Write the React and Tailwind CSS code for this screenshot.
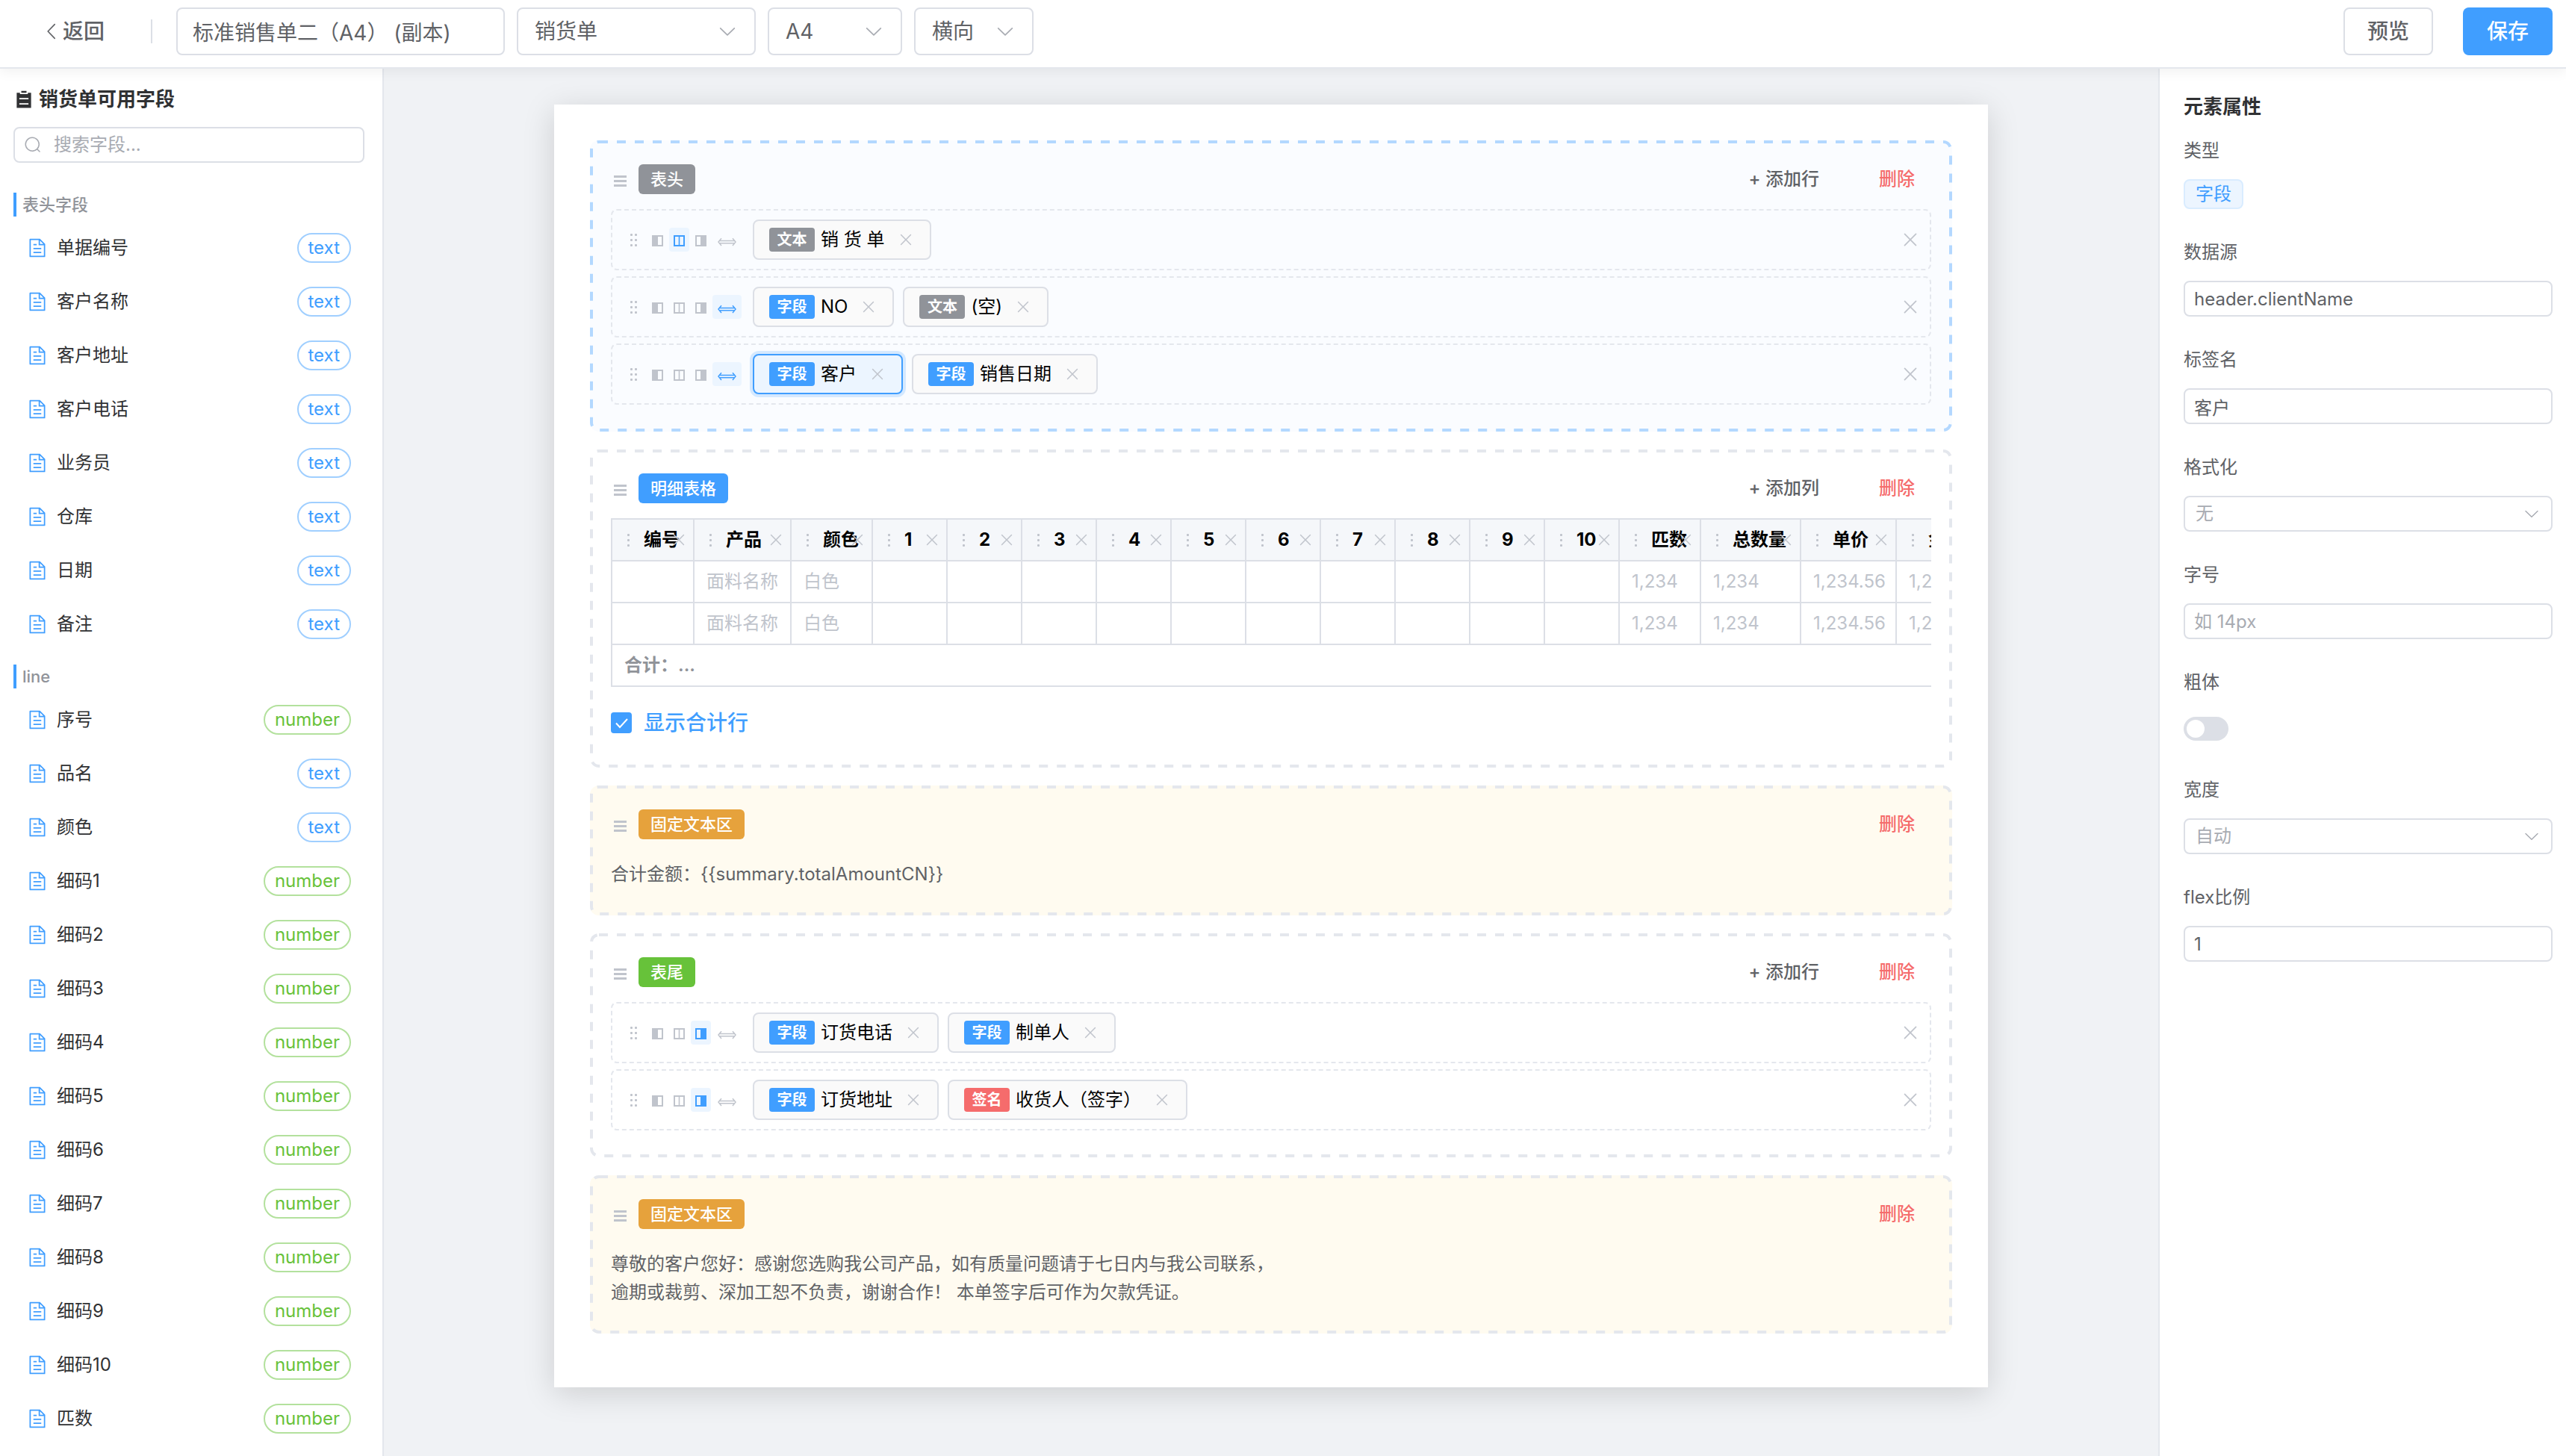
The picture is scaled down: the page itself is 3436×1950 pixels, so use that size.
import React from "react";

const PATHS = {
  arrowDown:
    "M831.872 340.864 512 652.672 192.128 340.864a30.592 30.592 0 0 0-42.752 0 29.12 29.12 0 0 0 0 41.6L489.664 714.24a32 32 0 0 0 44.672 0l340.288-331.712a29.12 29.12 0 0 0 0-41.728 30.592 30.592 0 0 0-42.752 0z",
  arrowLeft:
    "M609.408 149.376 277.76 489.6a32 32 0 0 0 0 44.672l331.648 340.352a29.12 29.12 0 0 0 41.728 0 30.592 30.592 0 0 0 0-42.752L339.264 511.936l311.872-319.872a30.592 30.592 0 0 0 0-42.688 29.12 29.12 0 0 0-41.728 0z",
  close:
    "M764.288 214.592 512 466.88 259.712 214.592a31.936 31.936 0 0 0-45.12 45.12L466.752 512 214.528 764.224a31.936 31.936 0 1 0 45.12 45.184L512 557.184l252.288 252.288a31.936 31.936 0 0 0 45.12-45.12L557.12 512.064l252.288-252.352a31.936 31.936 0 1 0-45.12-45.184z",
  document:
    "M832 384H576V128H192v768h640zm-26.496-64L640 154.496V320zM160 64h480l256 256v608a32 32 0 0 1-32 32H160a32 32 0 0 1-32-32V96a32 32 0 0 1 32-32m160 448h384v64H320zm0-192h160v64H320zm0 384h384v64H320z",
  search:
    "m795.904 750.72 124.992 124.928a32 32 0 0 1-45.248 45.248L750.656 795.904a416 416 0 1 1 45.248-45.248zM480 832a352 352 0 1 0 0-704 352 352 0 0 0 0 704",
  list: "M704 192h160v736H160V192h160v64h384zM288 512h448v-64H288zm0 256h448v-64H288zm96-576V96h256v96z",
};

function Icon({ name, className }) {
  return (
    <svg viewBox="0 0 1024 1024" fill="currentColor" aria-hidden="true" className={className}>
      <path d={PATHS[name]} />
    </svg>
  );
}

/* ---------- top bar ---------- */

function SelectBox({ id, label, value, className, size = "large", muted }) {
  const large = size === "large";
  return (
    <div className={`relative ${className}`}>
      <select
        id={id}
        aria-label={label}
        defaultValue={value}
        className={`w-full appearance-none rounded-lg border-2 border-[#dcdfe6] bg-white outline-none ${
          large ? "h-16 pr-14 pl-[22px] text-[28px]" : "h-12 pr-12 pl-3.5 text-2xl"
        } ${muted ? "text-[#a8abb2]" : "text-[#606266]"}`}
      >
        <option>{value}</option>
      </select>
      <Icon
        name="arrowDown"
        className={`pointer-events-none absolute text-[#a8abb2] ${
          large ? "top-[18px] right-6 size-7" : "top-3 right-4 size-6"
        }`}
      />
    </div>
  );
}

function TopBar() {
  return (
    <header className="relative z-10 flex shrink-0 items-center border-b-2 border-[#e4e7ed] bg-white pt-2.5 pr-[18px] pb-4 pl-[26px] shadow-[0_4px_16px_rgba(0,0,0,0.06)]">
      <button type="button" className="flex h-16 items-center px-[30px] text-[28px] font-medium text-[#606266]">
        <Icon name="arrowLeft" className="size-7" />
        返回
      </button>
      <div className="mx-8 h-8 w-0.5 bg-[#dcdfe6]" />
      <div className="flex gap-4">
        <input
          aria-label="模板名称"
          defaultValue="标准销售单二（A4） (副本)"
          className="h-16 w-[440px] rounded-lg border-2 border-[#dcdfe6] px-5 text-[28px] text-[#606266] outline-none"
        />
        <SelectBox label="单据类型" value="销货单" className="w-80" />
        <SelectBox label="纸张" value="A4" className="w-[180px]" />
        <SelectBox label="方向" value="横向" className="w-40" />
      </div>
      <div className="ml-auto flex gap-10">
        <button type="button" className="h-16 w-30 rounded-lg border-2 border-[#dcdfe6] text-[28px] font-medium text-[#606266]">
          预览
        </button>
        <button type="button" className="h-16 w-30 rounded-lg bg-[#409eff] text-[28px] font-medium text-white">
          保存
        </button>
      </div>
    </header>
  );
}

/* ---------- field list ---------- */

const FIELD_GROUPS = [
  {
    title: "表头字段",
    fields: [
      ["单据编号", "text"],
      ["客户名称", "text"],
      ["客户地址", "text"],
      ["客户电话", "text"],
      ["业务员", "text"],
      ["仓库", "text"],
      ["日期", "text"],
      ["备注", "text"],
    ],
  },
  {
    title: "line",
    fields: [
      ["序号", "number"],
      ["品名", "text"],
      ["颜色", "text"],
      ["细码1", "number"],
      ["细码2", "number"],
      ["细码3", "number"],
      ["细码4", "number"],
      ["细码5", "number"],
      ["细码6", "number"],
      ["细码7", "number"],
      ["细码8", "number"],
      ["细码9", "number"],
      ["细码10", "number"],
      ["匹数", "number"],
    ],
  },
];

function TypeBadge({ type }) {
  const tone =
    type === "text" ? "border-[#a0cfff] text-[#409eff]" : "border-[#b3e19d] text-[#67c23a]";
  return (
    <span className={`flex h-10 items-center rounded-full border-2 px-[13px] text-2xl ${tone}`}>{type}</span>
  );
}

function FieldPanel() {
  return (
    <aside className="w-[514px] shrink-0 overflow-hidden border-r-2 border-[#e4e7ed] bg-white px-[18px] pt-4">
      <h2 className="mb-3 flex items-center gap-1.5 text-[26px] leading-[50px] font-bold text-[#303133]">
        <Icon name="list" className="size-7" />
        销货单可用字段
      </h2>
      <label className="mr-1.5 mb-[22px] flex h-12 items-center gap-4 rounded-lg border-2 border-[#dcdfe6] px-3 text-[#a8abb2]">
        <Icon name="search" className="size-6 shrink-0" />
        <input
          type="search"
          aria-label="搜索字段"
          placeholder="搜索字段..."
          className="min-w-0 flex-1 text-2xl outline-none placeholder:text-[#a8abb2]"
        />
      </label>
      {FIELD_GROUPS.map((group) => (
        <section key={group.title} className="pt-[18px]">
          <h3 className="mb-1.5 border-l-4 border-[#409eff] pl-2 text-[22px] leading-8 font-medium text-[#909399]">
            {group.title}
          </h3>
          <ul>
            {group.fields.map(([name, type]) => (
              <li key={name} className="flex h-18 items-center gap-3 pr-6 pl-[18px] text-2xl text-[#303133]">
                <Icon name="document" className="size-7 text-[#409eff]" />
                <span className="flex-1">{name}</span>
                <TypeBadge type={type} />
              </li>
            ))}
          </ul>
        </section>
      ))}
    </aside>
  );
}

/* ---------- paper ---------- */

function DashedOutline({ className }) {
  return (
    <svg aria-hidden="true" fill="none" className={`pointer-events-none absolute inset-0 size-full ${className}`}>
      <rect
        x="2"
        y="2"
        rx="10"
        stroke="currentColor"
        strokeWidth="4"
        strokeDasharray="12 12"
        className="h-[calc(100%-4px)] w-[calc(100%-4px)]"
      />
    </svg>
  );
}

function SectionCard({ tag, tagClass, add, className, outlineClass = "text-[#e4e7ed]", children }) {
  return (
    <section className={`relative mb-6 rounded-xl p-7 ${className}`}>
      <DashedOutline className={outlineClass} />
      <div className="mb-4 flex h-12 items-center">
        <svg width="25" height="20" viewBox="0 0 25 20" fill="#c0c4cc" aria-hidden="true" className="mr-3">
          <path d="M4 5h17v3H4zM4 11h17v3H4zM4 17h17v3H4z" />
        </svg>
        <span className={`flex h-10 items-center rounded-md px-4 text-[22px] font-medium text-white ${tagClass}`}>
          {tag}
        </span>
        <div className="ml-auto flex gap-8 text-2xl font-medium">
          {add && (
            <button type="button" className="px-6 text-[#606266]">
              + {add}
            </button>
          )}
          <button type="button" className="pr-[22px] pl-6 text-[#f56c6c]">
            删除
          </button>
        </div>
      </div>
      {children}
    </section>
  );
}

function GripDots({ columns }) {
  const xs = columns === 2 ? [4, 10] : [4];
  return (
    <svg
      width={columns === 2 ? 16 : 8}
      height="24"
      viewBox={columns === 2 ? "0 0 16 24" : "0 0 8 24"}
      fill="#c0c4cc"
      aria-hidden="true"
      className="shrink-0"
    >
      {xs.map((x) => [5, 12, 19].map((y) => <rect key={`${x}-${y}`} x={x} y={y - 1} width="3" height="3" rx="1" />))}
    </svg>
  );
}

const ALIGNMENTS = [
  { id: "left", label: "左对齐" },
  { id: "center", label: "居中" },
  { id: "right", label: "右对齐" },
  { id: "justify", label: "两端对齐" },
];

function AlignGlyph({ id }) {
  if (id === "justify") {
    return (
      <svg width="25" height="20" viewBox="0 0 25 20" fill="none" stroke="currentColor" strokeWidth="1.5" aria-hidden="true">
        <path d="M2.5 11.5h20M2.5 14.8h20" />
        <path d="M5 8.2 L1 13.1 L5 18M20 8.2 L24 13.1 L20 18" />
      </svg>
    );
  }
  return (
    <svg width="15" height="18" viewBox="0 0 15 18" fill="none" stroke="currentColor" strokeWidth="2" aria-hidden="true">
      <path d="M1 4h13v13H1z" />
      {id === "left" && <path d="M1 4h6v13H1z" fill="currentColor" />}
      {id === "center" && <path d="M7.5 4v13" strokeWidth="1.6" />}
      {id === "right" && <path d="M8 4h6v13H8z" fill="currentColor" />}
    </svg>
  );
}

const CHIP_TONES = {
  字段: "bg-[#409eff]",
  文本: "bg-[#909399]",
  签名: "bg-[#f56c6c]",
};

function Chip({ kind, text, selected }) {
  return (
    <div
      className={`flex h-[54px] items-center rounded-lg border-2 px-5 ${
        selected
          ? "border-[#409eff] bg-[#ecf5ff] shadow-[0_0_0_4px_rgba(64,158,255,0.2)]"
          : "border-[#dcdfe6] bg-[#fafafa]"
      }`}
    >
      <span
        className={`mr-2 flex h-8 w-[61px] items-center justify-center rounded-sm text-xl font-bold text-white ${CHIP_TONES[kind]}`}
      >
        {kind}
      </span>
      <span className="text-2xl text-black">{text}</span>
      <button type="button" aria-label={`移除${text}`} className="ml-4 text-[#c0c4cc]">
        <Icon name="close" className="size-6" />
      </button>
    </div>
  );
}

function FieldRow({ align, chips }) {
  return (
    <div className="mb-2 flex items-center rounded-lg border-2 border-dashed border-[#e4e7ed] py-3 pr-3 pl-5">
      <GripDots columns={2} />
      <div className="mr-[15px] ml-[11px] flex gap-0.5">
        {ALIGNMENTS.map(({ id, label }) => (
          <button
            key={id}
            type="button"
            aria-label={label}
            className={`flex h-8 items-center justify-center rounded-sm ${id === "justify" ? "w-[39px]" : "w-[27px]"} ${
              id === align ? "bg-[#ecf5ff] text-[#409eff]" : "text-[#c0c4cc]"
            }`}
          >
            <AlignGlyph id={id} />
          </button>
        ))}
      </div>
      <div className="flex flex-1 gap-3">
        {chips.map((chip) => (
          <Chip key={chip.text} {...chip} />
        ))}
      </div>
      <button type="button" aria-label="删除行" className="text-[#c0c4cc]">
        <Icon name="close" className="size-7" />
      </button>
    </div>
  );
}

const COLUMNS = [
  { title: "编号", width: "w-[110px]", sample: "" },
  { title: "产品", width: "w-[130px]", sample: "面料名称" },
  { title: "颜色", width: "w-[109px]", sample: "白色" },
  ...Array.from({ length: 10 }, (_, i) => ({ title: String(i + 1), width: "w-[100px]", sample: "" })),
  { title: "匹数", width: "w-[109px]", sample: "1,234" },
  { title: "总数量", width: "w-[134px]", sample: "1,234" },
  { title: "单价", width: "w-[128px]", sample: "1,234.56" },
  { title: "金额", width: "w-[128px]", sample: "1,234.56" },
];

function DetailTable() {
  return (
    <div className="overflow-hidden">
      <table className="w-[1848px] table-fixed border-collapse text-2xl">
        <colgroup>
          {COLUMNS.map((c) => (
            <col key={c.title} className={c.width} />
          ))}
        </colgroup>
        <thead>
          <tr className="h-14 bg-[#f5f7fa]">
            {COLUMNS.map((c) => (
              <th key={c.title} scope="col" className="relative border-2 border-[#dcdfe6] p-0 text-left font-bold text-black">
                <div className="flex items-center gap-[18px] pl-4 whitespace-nowrap">
                  <GripDots columns={1} />
                  {c.title}
                </div>
                <button type="button" aria-label={`删除列${c.title}`} className="absolute top-[15px] right-[7px] text-[#c0c4cc]">
                  <Icon name="close" className="size-6" />
                </button>
              </th>
            ))}
          </tr>
        </thead>
        <tbody>
          {[0, 1].map((row) => (
            <tr key={row} className="h-14">
              {COLUMNS.map((c) => (
                <td key={c.title} className="border-2 border-[#dcdfe6] py-0 pr-0 pl-4 whitespace-nowrap text-[#c0c4cc]">
                  {c.sample}
                </td>
              ))}
            </tr>
          ))}
          <tr className="h-14">
            <td colSpan={COLUMNS.length} className="border-2 border-[#dcdfe6] py-0 pl-4 font-semibold text-[#909399]">
              合计：...
            </td>
          </tr>
        </tbody>
      </table>
    </div>
  );
}

function TotalToggle() {
  return (
    <label className="mt-4 flex h-16 w-fit items-center gap-4 text-[28px] font-medium text-[#409eff]">
      <span className="grid">
        <input
          type="checkbox"
          defaultChecked
          className="col-start-1 row-start-1 size-7 appearance-none rounded-sm border-2 border-[#dcdfe6] checked:border-[#409eff] checked:bg-[#409eff]"
        />
        <svg
          width="28"
          height="28"
          viewBox="0 0 28 28"
          fill="none"
          stroke="white"
          strokeWidth="2"
          aria-hidden="true"
          className="pointer-events-none col-start-1 row-start-1"
        >
          <path d="M7 14.5 L12 20 L22 9" />
        </svg>
      </span>
      显示合计行
    </label>
  );
}

function FixedText({ lines }) {
  return (
    <SectionCard tag="固定文本区" tagClass="bg-[#e6a23c]" className="bg-[#fffbf0]">
      <div className="py-2 text-2xl leading-[38px] text-[#606266]">
        {lines.map((line) => (
          <p key={line}>{line}</p>
        ))}
      </div>
    </SectionCard>
  );
}

function Paper() {
  return (
    <main className="min-w-0 flex-1 overflow-hidden bg-[#f0f2f5] px-12 py-12">
      <div className="mx-auto w-full max-w-[1920px] bg-white px-12 pt-12 pb-12 shadow-[0_8px_40px_rgba(0,0,0,0.15)]">
        <SectionCard tag="表头" tagClass="bg-[#909399]" add="添加行" outlineClass="text-[#b3d8ff]" className="bg-[#fafcff]">
          <FieldRow align="center" chips={[{ kind: "文本", text: "销 货 单" }]} />
          <FieldRow
            align="justify"
            chips={[
              { kind: "字段", text: "NO" },
              { kind: "文本", text: "(空)" },
            ]}
          />
          <FieldRow
            align="justify"
            chips={[
              { kind: "字段", text: "客户", selected: true },
              { kind: "字段", text: "销售日期" },
            ]}
          />
        </SectionCard>
        <SectionCard tag="明细表格" tagClass="bg-[#409eff]" add="添加列" className="bg-white">
          <DetailTable />
          <TotalToggle />
        </SectionCard>
        <FixedText lines={["合计金额：{{summary.totalAmountCN}}"]} />
        <SectionCard tag="表尾" tagClass="bg-[#67c23a]" add="添加行" className="bg-white">
          <FieldRow
            align="right"
            chips={[
              { kind: "字段", text: "订货电话" },
              { kind: "字段", text: "制单人" },
            ]}
          />
          <FieldRow
            align="right"
            chips={[
              { kind: "字段", text: "订货地址" },
              { kind: "签名", text: "收货人（签字）" },
            ]}
          />
        </SectionCard>
        <FixedText
          lines={[
            "尊敬的客户您好：感谢您选购我公司产品，如有质量问题请于七日内与我公司联系，",
            "逾期或裁剪、深加工恕不负责，谢谢合作！ 本单签字后可作为欠款凭证。",
          ]}
        />
      </div>
    </main>
  );
}

/* ---------- properties ---------- */

function FormItem({ label, htmlFor, children }) {
  return (
    <div className="mb-9">
      <label htmlFor={htmlFor} className="mb-4 block text-2xl leading-[44px] text-[#606266]">
        {label}
      </label>
      {children}
    </div>
  );
}

function TextInput(props) {
  return (
    <input
      {...props}
      className="block h-12 w-full rounded-lg border-2 border-[#dcdfe6] px-3 text-2xl text-[#606266] outline-none placeholder:text-[#a8abb2]"
    />
  );
}

function PropertyPanel() {
  return (
    <aside className="w-[546px] shrink-0 overflow-hidden border-l-2 border-[#e4e7ed] bg-white pt-8 pr-[18px] pl-8">
      <h2 className="mb-[18px] text-[26px] leading-[38px] font-bold text-[#303133]">元素属性</h2>
      <div className="mb-9">
        <p className="mb-4 text-2xl leading-[44px] text-[#606266]">类型</p>
        <span className="flex h-10 w-20 items-center justify-center rounded-lg border-2 border-[#d9ecff] bg-[#ecf5ff] text-2xl text-[#409eff]">
          字段
        </span>
      </div>
      <FormItem label="数据源" htmlFor="source">
        <TextInput id="source" defaultValue="header.clientName" />
      </FormItem>
      <FormItem label="标签名" htmlFor="label">
        <TextInput id="label" defaultValue="客户" />
      </FormItem>
      <FormItem label="格式化" htmlFor="format">
        <SelectBox id="format" value="无" size="small" muted className="w-full" />
      </FormItem>
      <FormItem label="字号" htmlFor="font-size">
        <TextInput id="font-size" placeholder="如 14px" />
      </FormItem>
      <FormItem label="粗体" htmlFor="bold">
        <div className="flex h-12 items-center">
          <input
            id="bold"
            type="checkbox"
            role="switch"
            className="flex h-8 w-15 appearance-none items-center rounded-full bg-[#dcdfe6] px-1 before:size-6 before:rounded-full before:bg-white checked:justify-end checked:bg-[#409eff]"
          />
        </div>
      </FormItem>
      <FormItem label="宽度" htmlFor="width">
        <SelectBox id="width" value="自动" size="small" muted className="w-full" />
      </FormItem>
      <FormItem label="flex比例" htmlFor="flex">
        <TextInput id="flex" defaultValue="1" />
      </FormItem>
    </aside>
  );
}

export default function App() {
  return (
    <div className="flex h-screen flex-col overflow-hidden bg-white font-['Inter','Noto_Sans_CJK_SC',sans-serif]">
      <TopBar />
      <div className="flex min-h-0 flex-1">
        <FieldPanel />
        <Paper />
        <PropertyPanel />
      </div>
    </div>
  );
}
